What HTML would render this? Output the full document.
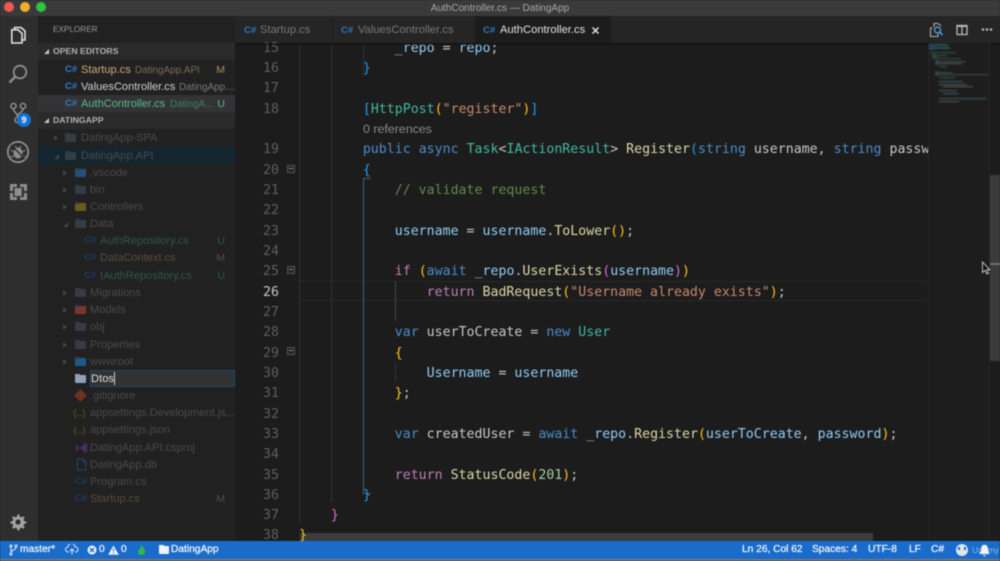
<!DOCTYPE html>
<html><head><meta charset="utf-8"><style>
*{box-sizing:border-box}
html,body{margin:0;padding:0;width:1000px;height:561px;overflow:hidden;background:#1c1c1c}
body{position:relative;font-family:"Liberation Sans",sans-serif}
#root{position:absolute;left:0;top:0;width:1000px;height:561px;filter:blur(.4px);overflow:hidden}
.a{position:absolute}
#root div,#root span.a{white-space:pre}
.r{position:absolute;left:38px;width:197px;height:17px;line-height:17px;font-size:11.05px;color:#4a4a4a}
.r .t{position:absolute;top:1px}
.r .s{position:absolute;top:1px;font-size:9.9px}
.r .g{position:absolute;top:1px;right:10px;font-size:10.5px}
.cs{position:absolute;top:0;color:#1b3e5e;font-weight:bold;font-size:9.5px}
.ar{position:absolute;top:6px;width:0;height:0;border-left:4px solid #444;border-top:3px solid transparent;border-bottom:3px solid transparent}
.dn{position:absolute;top:7px;width:0;height:0;border-bottom:5px solid #444;border-left:5px solid transparent}
.f{position:absolute;top:5px;width:11px;height:8px;background:#363c43;border-radius:1px}
.f:before{content:"";position:absolute;left:0;top:-1px;width:5px;height:2px;background:#363c43;border-radius:1px}
.h{position:absolute;left:38px;width:197px;height:17px;line-height:17px;background:#2a2a2b;color:#b0b0b0;font-size:8.7px;font-weight:bold}
.h i{position:absolute;left:6px;top:6px;width:0;height:0;border-bottom:5px solid #c4c4c4;border-left:5px solid transparent}
.h b{position:absolute;left:15px;top:0}
.n{position:absolute;left:250px;width:29px;text-align:right;height:20px;margin-top:2px;font:13.25px/20px "DejaVu Sans Mono","Liberation Mono",monospace;color:#5e5e5e}
.c{position:absolute;left:299px;height:20px;margin-top:2px;font:13.25px/20px "DejaVu Sans Mono","Liberation Mono",monospace;color:#d4d4d4;width:629px;overflow:hidden}
.k{color:#4a8ccb}.v{color:#8fcdf5}.y{color:#41b9a0}.m{color:#d9d9a8}.q{color:#c98a6c}.o{color:#5f8a4d}.p{color:#c07fb8}.b{color:#ffc21a}.l{color:#1f9cf0}.w{color:#d86fd0}.d{color:#c8c8c8}.z{color:#a9cea0}
.tab{position:absolute;top:16px;height:27px;line-height:29px;font-size:11.2px;color:#787878}
.tab i{position:absolute;top:0;left:8px;font-style:normal;font-weight:bold;font-size:9.5px;color:#2d79b8}
.st{position:absolute;top:541px;height:18px;line-height:18px;font-size:10.2px;color:#f0f4fa;-webkit-text-stroke:.25px #f0f4fa}
.fold{position:absolute;left:287px;width:8px;height:8px;border:1px solid #555;background:#232323}
.fold:after{content:"";position:absolute;left:1px;top:2px;width:4px;height:1px;background:#8a8a8a}
</style></head><body><div id="root">

<div class="a" style="left:0;top:0;width:1000px;height:16px;background:#3a3a3a"></div>
<div class="a" style="left:0;top:0;width:1000px;height:16px;line-height:15px;padding-top:1px;text-align:center;font-size:10px;color:#a8a8a8">AuthController.cs — DatingApp</div>
<div class="a" style="left:4px;top:2px;width:10px;height:10px;border-radius:50%;background:#f0584f"></div>
<div class="a" style="left:20px;top:2px;width:10px;height:10px;border-radius:50%;background:#f4ad2b"></div>
<div class="a" style="left:36px;top:2px;width:10px;height:10px;border-radius:50%;background:#2dc33f"></div>

<!-- activity bar -->
<div class="a" style="left:0;top:16px;width:38px;height:525px;background:#2e2e2f"></div>
<svg class="a" style="left:0;top:16px" width="38" height="525" fill="none">
<g stroke="#e6e6e6" stroke-width="1.5"><path d="M11.800 13.800 V27 H22 V17.500 L18 13.800 Z"/><path d="M14.500 13.500 V11.500 H21 L25 15 V24 H22.500"/></g>
<g stroke="#8d8d8d" stroke-width="1.800"><circle cx="20" cy="56" r="6.300"/><path d="M15.500 60.500 L9.500 66.500" stroke-width="2.400"/></g>
<g stroke="#8d8d8d" stroke-width="1.500"><circle cx="13.500" cy="90" r="2.600"/><circle cx="23" cy="90" r="2.600"/><circle cx="17.500" cy="104" r="2.600"/><path d="M13.500 93 C13.500 97 17.500 96 17.500 101 M23 93 C23 97 17.500 96 17.500 101"/></g>
<g stroke="#8d8d8d"><circle cx="18" cy="136" r="10.200" stroke-width="1.800"/><ellipse cx="18" cy="137" rx="4.500" ry="5.500" fill="#8d8d8d" stroke="none"/><path d="M10.500 134 L14 136 M10.500 141 L14 140 M25.500 134 L22 136 M25.500 141 L22 140 M15 130 L16.500 132 M21 130 L19.500 132" stroke-width="1"/><path d="M11 129 L25 143" stroke="#2e2e2f" stroke-width="1.500"/></g>
<g><path d="M10 168 h7 v3 h-4 v4 h-3 z M20 168 h7 v7 h-3 v-4 h-4 z M10 177 h3 v4 h4 v3 h-7 z M24 177 h3 v7 h-7 v-3 h4 z" fill="#8d8d8d"/><rect x="14.500" y="172" width="8" height="8" fill="#8d8d8d"/><path d="M22 172.500 v8 h-7" stroke="#2e2e2f" stroke-width=".8"/></g>
</svg>
<div class="a" style="left:17px;top:113px;width:14px;height:14px;border-radius:50%;background:#1473d4;color:#fff;font-size:9px;font-weight:bold;line-height:14px;text-align:center">9</div>
<svg class="a" style="left:9px;top:513px" width="18" height="18"><path d="M9 1.500 l1.300 0 .5 2.200 1.700 .7 1.900-1.200 1.300 1.300-1.200 1.900 .7 1.700 2.200 .5 0 1.800-2.200 .5-.7 1.700 1.200 1.900-1.300 1.300-1.900-1.200-1.700 .7-.5 2.200-1.800 0-.5-2.200-1.700-.7-1.900 1.200-1.300-1.300 1.200-1.900-.7-1.700-2.200-.5 0-1.800 2.200-.5 .7-1.700-1.200-1.900 1.300-1.300 1.900 1.200 1.700-.7 .5-2.200 z" fill="#a2a2a2"/><circle cx="9" cy="9" r="2.600" fill="#2e2e2f"/></svg>

<!-- sidebar -->
<div class="a" style="left:38px;top:16px;width:197px;height:525px;background:#212122"></div>
<div class="a" style="left:53px;top:22px;font-size:8.2px;color:#9a9a9a;line-height:16px">EXPLORER</div>
<div class="h" style="top:43px"><i></i><b>OPEN EDITORS</b></div>

<div class="r" style="top:61px"><span class="cs" style="left:27px;color:#2d7dc0">C#</span><span class="t" style="left:43px;color:#d0a878">Startup.cs</span><span class="s" style="left:97px;color:#7c6a52">DatingApp.API</span><span class="g" style="color:#a88c60">M</span></div>
<div class="r" style="top:78px"><span class="cs" style="left:27px;color:#2d7dc0">C#</span><span class="t" style="left:43px;color:#d0d0d0">ValuesController.cs</span><span class="s" style="left:141px;color:#7a7a7a">DatingApp....</span></div>
<div class="a" style="left:38px;top:95px;width:197px;height:17px;background:#333336"></div>
<div class="r" style="top:95px"><span class="cs" style="left:27px;color:#2d7dc0">C#</span><span class="t" style="left:43px;color:#58b98a">AuthController.cs</span><span class="s" style="left:132px;color:#3f7f60">DatingA...</span><span class="g" style="color:#58b98a">U</span></div>
<div class="h" style="top:112px;background:#2a2a2b"><i></i><b>DATINGAPP</b></div>

<div class="r" style="top:129px"><span class="ar" style="left:16px"></span><span class="f" style="left:27px"></span><span class="t" style="left:43px">DatingApp-SPA</span></div>
<div class="a" style="left:38px;top:147px;width:197px;height:17px;background:#13262f"></div>
<div class="r" style="top:147px"><span class="dn" style="left:16px"></span><span class="f" style="left:27px"></span><span class="t" style="left:43px">DatingApp.API</span></div>
<div class="r" style="top:164px"><span class="ar" style="left:25px"></span><span class="f" style="left:37px;background:#24507a"></span><span class="t" style="left:52px">.vscode</span></div>
<div class="r" style="top:181px"><span class="ar" style="left:25px"></span><span class="f" style="left:37px"></span><span class="t" style="left:52px">bin</span></div>
<div class="r" style="top:198px"><span class="ar" style="left:25px"></span><span class="f" style="left:37px;background:#6a5a20"></span><span class="t" style="left:52px">Controllers</span></div>
<div class="r" style="top:215px"><span class="dn" style="left:25px"></span><span class="f" style="left:37px"></span><span class="t" style="left:52px">Data</span></div>
<div class="r" style="top:232px"><span class="cs" style="left:46px">C#</span><span class="t" style="left:62px;color:#2f5744">AuthRepository.cs</span><span class="g" style="color:#2f5744">U</span></div>
<div class="r" style="top:249px"><span class="cs" style="left:46px">C#</span><span class="t" style="left:62px;color:#5a4c3a">DataContext.cs</span><span class="g" style="color:#5a4c3a">M</span></div>
<div class="r" style="top:267px"><span class="cs" style="left:46px">C#</span><span class="t" style="left:62px;color:#2f5744">IAuthRepository.cs</span><span class="g" style="color:#2f5744">U</span></div>
<div class="r" style="top:284px"><span class="ar" style="left:25px"></span><span class="f" style="left:37px"></span><span class="t" style="left:52px">Migrations</span></div>
<div class="r" style="top:301px"><span class="ar" style="left:25px"></span><span class="f" style="left:37px;background:#7a3530"></span><span class="t" style="left:52px">Models</span></div>
<div class="r" style="top:318px"><span class="ar" style="left:25px"></span><span class="f" style="left:37px"></span><span class="t" style="left:52px">obj</span></div>
<div class="r" style="top:336px"><span class="ar" style="left:25px"></span><span class="f" style="left:37px"></span><span class="t" style="left:52px">Properties</span></div>
<div class="r" style="top:353px"><span class="ar" style="left:25px"></span><span class="f" style="left:37px;background:#1f5a8a"></span><span class="t" style="left:52px">wwwroot</span></div>

<div class="a" style="left:75px;top:375px;width:11px;height:8px;background:#8ea3b3;border-radius:1px"></div>
<div class="a" style="left:75px;top:374px;width:5px;height:2px;background:#8ea3b3"></div>
<div class="a" style="left:90px;top:370px;width:145px;height:17px;background:#323233;border:1px solid #1c4a6e"></div>
<div class="a" style="left:91px;top:371px;line-height:17px;font-size:11.200px;color:#dcdcdc">Dtos</div>
<div class="a" style="left:114px;top:372px;width:1px;height:13px;background:#d0d0d0"></div>

<div class="r" style="top:387px"><span class="a" style="left:38px;top:4px;width:9px;height:9px;background:#6d3320;transform:rotate(45deg)"></span><span class="t" style="left:52px">.gitignore</span></div>
<div class="r" style="top:404px"><span class="t" style="left:35px;color:#4f451f;font-weight:bold;font-size:9.500px">{..}</span><span class="t" style="left:52px">appsettings.Development.js...</span></div>
<div class="r" style="top:421px"><span class="t" style="left:35px;color:#4f451f;font-weight:bold;font-size:9.500px">{..}</span><span class="t" style="left:52px">appsettings.json</span></div>
<div class="r" style="top:439px"><svg class="a" style="left:37px;top:3px" width="13" height="11"><path d="M1 3 L5 6 L1 9 Z M5 6 L10 1 L12 2 V10 L10 10.500 Z" fill="#4a2d63"/></svg><span class="t" style="left:52px">DatingApp.API.csproj</span></div>
<div class="r" style="top:456px"><svg class="a" style="left:38px;top:2px" width="11" height="13" fill="none"><path d="M1.500 1 H7 L10 4 V12 H1.500 Z M7 1 V4 H10" stroke="#21405f" stroke-width="1.200"/></svg><span class="t" style="left:52px">DatingApp.db</span></div>
<div class="r" style="top:473px"><span class="cs" style="left:37px">C#</span><span class="t" style="left:52px">Program.cs</span></div>
<div class="r" style="top:490px"><span class="cs" style="left:37px">C#</span><span class="t" style="left:52px;color:#5a4c3a">Startup.cs</span><span class="g" style="color:#5a4c3a">M</span></div>

<!-- tabs -->
<div class="a" style="left:235px;top:16px;width:765px;height:27px;background:#252526"></div>
<div class="a" style="left:332px;top:16px;width:1px;height:27px;background:#1e1e1e"></div>
<div class="a" style="left:475px;top:16px;width:136px;height:27px;background:#1c1c1c"></div>
<div class="tab" style="left:236px;width:96px"><i>C#</i><span class="a" style="left:24px;top:0">Startup.cs</span></div>
<div class="tab" style="left:333px;width:142px"><i>C#</i><span class="a" style="left:25px;top:0">ValuesController.cs</span></div>
<div class="tab" style="left:475px;width:136px;color:#e2e2e2"><i>C#</i><span class="a" style="left:25px;top:0">AuthController.cs</span></div>
<svg class="a" style="left:591px;top:26px" width="9" height="9"><path d="M1.500 1.500 L7.500 7.500 M7.500 1.500 L1.500 7.500" stroke="#e4e4e4" stroke-width="1.500"/></svg>
<svg class="a" style="left:928px;top:22px" width="20" height="16" fill="none"><path d="M3.500 6 H1.500 V14.500 H9 V12" stroke="#b0b0b0" stroke-width="1.100" transform="translate(1 0)"/><path d="M6 5 V1.500 H10 L13 4" stroke="#b0b0b0" stroke-width="1.100"/><circle cx="9.500" cy="8" r="3" stroke="#4b9be0" stroke-width="1.400"/><path d="M11.500 10 L14.500 13" stroke="#4b9be0" stroke-width="1.600"/></svg>
<svg class="a" style="left:956px;top:24px" width="13" height="12" fill="none"><rect x="1" y="1.500" width="10" height="9" stroke="#b8b8b8" stroke-width="1.300"/><path d="M6 1.500 V10.500" stroke="#b8b8b8" stroke-width="1.300"/><path d="M1 2 H11" stroke="#b8b8b8" stroke-width="2"/></svg>
<svg class="a" style="left:981px;top:27px" width="12" height="5"><circle cx="2" cy="2.500" r="1.300" fill="#b8b8b8"/><circle cx="6" cy="2.500" r="1.300" fill="#b8b8b8"/><circle cx="10" cy="2.500" r="1.300" fill="#b8b8b8"/></svg>

<!-- editor decor -->
<div class="a" style="left:235px;top:43px;width:765px;height:498px;background:#1c1c1c"></div>
<div class="a" style="left:300px;top:533px;width:573px;height:8px;background:#3c3c3c"></div>
<div class="a" style="left:300px;top:281px;width:628px;height:20px;border-top:1px solid #292929;border-bottom:1px solid #292929"></div>
<div class="a" style="left:299px;top:43px;width:1px;height:481px;background:#303030"></div>
<div class="a" style="left:331px;top:43px;width:1px;height:460px;background:#303030"></div>
<div class="a" style="left:363px;top:43px;width:1px;height:32px;background:#303030"></div>
<div class="a" style="left:363px;top:178px;width:8px;height:316px;border-left:1px solid #44627c;border-top:1px solid #44627c;border-bottom:1px solid #44627c"></div>
<div class="a" style="left:395px;top:281px;width:1px;height:40px;background:#454545"></div>
<div class="a" style="left:395px;top:362px;width:1px;height:20px;background:#333"></div>
<div class="fold" style="top:165px"></div><div class="fold" style="top:266px"></div><div class="fold" style="top:347px"></div>

<!-- line numbers -->
<div class="n" style="top:37px">15</div><div class="n" style="top:57px">16</div><div class="n" style="top:77px">17</div><div class="n" style="top:98px">18</div>
<div class="n" style="top:138px">19</div><div class="n" style="top:159px">20</div><div class="n" style="top:179px">21</div><div class="n" style="top:199px">22</div><div class="n" style="top:220px">23</div><div class="n" style="top:240px">24</div><div class="n" style="top:260px">25</div><div class="n" style="top:281px;color:#c6c6c6">26</div><div class="n" style="top:301px">27</div><div class="n" style="top:321px">28</div><div class="n" style="top:342px">29</div><div class="n" style="top:362px">30</div><div class="n" style="top:382px">31</div><div class="n" style="top:403px">32</div><div class="n" style="top:423px">33</div><div class="n" style="top:443px">34</div><div class="n" style="top:464px">35</div><div class="n" style="top:484px">36</div><div class="n" style="top:504px">37</div><div class="n" style="top:524px">38</div>

<!-- code -->
<div class="c" style="top:37px">            <span class="v">_repo</span> <span class="d">=</span> <span class="v">repo</span><span class="d">;</span></div>
<div class="c" style="top:57px">        <span class="l">}</span></div>
<div class="c" style="top:98px">        <span class="l">[</span><span class="y">HttpPost</span><span class="b">(</span><span class="q">"register"</span><span class="b">)</span><span class="l">]</span></div>
<div class="a" style="left:363px;top:122px;font-size:12.400px;line-height:15px;color:#8a8a8a">0 references</div>
<div class="c" style="top:138px">        <span class="k">public</span> <span class="k">async</span> <span class="y">Task</span><span class="d">&lt;</span><span class="y">IActionResult</span><span class="d">&gt;</span> <span class="m">Register</span><span class="l">(</span><span class="k">string</span> <span class="d">username,</span> <span class="k">string</span> <span class="d">password</span></div>
<div class="c" style="top:159px">        <span class="l">{</span></div>
<div class="c" style="top:179px">            <span class="o">// validate request</span></div>
<div class="c" style="top:220px">            <span class="v">username</span> <span class="d">=</span> <span class="v">username</span><span class="d">.</span><span class="m">ToLower</span><span class="b">()</span><span class="d">;</span></div>
<div class="c" style="top:260px">            <span class="p">if</span> <span class="b">(</span><span class="k">await</span> <span class="v">_repo</span><span class="d">.</span><span class="m">UserExists</span><span class="w">(</span><span class="v">username</span><span class="w">)</span><span class="b">)</span></div>
<div class="c" style="top:281px">                <span class="p">return</span> <span class="m">BadRequest</span><span class="b">(</span><span class="q">"Username already exists"</span><span class="b">)</span><span class="d">;</span></div>
<div class="c" style="top:321px">            <span class="k">var</span> <span class="d">userToCreate</span> <span class="d">=</span> <span class="k">new</span> <span class="y">User</span></div>
<div class="c" style="top:342px">            <span class="b">{</span></div>
<div class="c" style="top:362px">                <span class="v">Username</span> <span class="d">=</span> <span class="v">username</span></div>
<div class="c" style="top:382px">            <span class="b">}</span><span class="d">;</span></div>
<div class="c" style="top:423px">            <span class="k">var</span> <span class="d">createdUser</span> <span class="d">=</span> <span class="k">await</span> <span class="v">_repo</span><span class="d">.</span><span class="m">Register</span><span class="b">(</span><span class="v">userToCreate</span><span class="d">, </span><span class="v">password</span><span class="b">)</span><span class="d">;</span></div>
<div class="c" style="top:464px">            <span class="p">return</span> <span class="m">StatusCode</span><span class="b">(</span><span class="z">201</span><span class="b">)</span><span class="d">;</span></div>
<div class="c" style="top:484px">        <span class="l">}</span></div>
<div class="c" style="top:504px">    <span class="w">}</span></div>
<div class="c" style="top:524px"><span class="b">}</span></div>

<div class="a" style="left:235px;top:43px;width:765px;height:3px;background:linear-gradient(#111,rgba(28,28,28,0))"></div>

<!-- minimap -->
<div class="a" style="left:928px;top:43px;width:62px;height:498px;background:#1d1d1d;border-left:1px solid #262626;border-right:1px solid #262626"></div>
<svg class="a" style="left:929px;top:43px;filter:blur(.5px)" width="60" height="62">
<g opacity=".65"><rect x="0" y="1" width="6" height="6" fill="#2a5a80"/><rect x="6" y="1" width="13" height="2" fill="#2f6f6a"/><rect x="6" y="4" width="15" height="2" fill="#2f6f6a"/>
<rect x="1" y="9" width="26" height="1.300" fill="#3f6a55"/><rect x="3" y="11" width="5" height="5" fill="#2f5f50"/><rect x="8" y="12" width="10" height="1.300" fill="#5a5a40"/><rect x="8" y="15" width="24" height="1.300" fill="#356055"/>
<rect x="6" y="17" width="4" height="5" fill="#2a4f66"/><rect x="7" y="18" width="30" height="1.300" fill="#3a6c70"/><rect x="7" y="20" width="26" height="1.300" fill="#6a6a50"/><rect x="10" y="23" width="8" height="1.300" fill="#606060"/>
<rect x="6" y="28" width="4" height="5" fill="#2a4f66"/><rect x="7" y="29" width="16" height="1.300" fill="#3a6c70"/><rect x="7" y="31" width="52" height="1.300" fill="#4a6050"/><rect x="10" y="34" width="16" height="1.300" fill="#4a6a40"/>
<rect x="10" y="38" width="24" height="1.300" fill="#4a7080"/><rect x="10" y="41" width="28" height="1.300" fill="#5a6a70"/><rect x="14" y="43" width="30" height="1.300" fill="#806050"/><rect x="10" y="47" width="18" height="1.300" fill="#406a70"/><rect x="14" y="50" width="16" height="1.300" fill="#4a7080"/>
<rect x="10" y="55" width="48" height="1.300" fill="#4a6a80"/><rect x="10" y="58" width="20" height="1.300" fill="#6a6a50"/></g>
</svg>
<div class="a" style="left:990px;top:175px;width:10px;height:186px;background:#3b3b3b"></div>
<div class="a" style="left:990px;top:263px;width:10px;height:2px;background:#6e6e6e"></div>
<svg class="a" style="left:981px;top:261px;z-index:5" width="10" height="15"><path d="M1.500 1 V11.500 L4 9.300 L5.800 13 L7.500 12.200 L5.800 8.700 H8.800 Z" fill="#111" stroke="#d0d0d0" stroke-width=".9"/></svg>

<!-- status bar -->
<div class="a" style="left:0;top:541px;width:1000px;height:18px;background:#1a6ccb"></div>
<div class="a" style="left:0;top:559px;width:1000px;height:2px;background:#77777a"></div>
<svg class="a" style="left:9px;top:544px" width="9" height="12" fill="none" stroke="#e6effa" stroke-width="1"><circle cx="2" cy="2" r="1"/><circle cx="7" cy="2" r="1"/><circle cx="2" cy="10" r="1"/><path d="M2 3 V9 M7 3 C7 6 3 6 2 8"/></svg>
<div class="st" style="left:20px">master*</div>
<svg class="a" style="left:65px;top:544px" width="14" height="11" fill="none" stroke="#dfe9f6" stroke-width="1"><path d="M4 8 H3 A2.500 2.500 0 0 1 3 3 A3.500 3.500 0 0 1 10 3 A2.500 2.500 0 0 1 11 8 H10"/><path d="M7 10.500 V5 M5 7 L7 5 L9 7"/></svg>
<svg class="a" style="left:87px;top:545px" width="10" height="10"><circle cx="5" cy="5" r="4.500" fill="#f0f4fa"/><path d="M3 3 L7 7 M7 3 L3 7" stroke="#1a6ccb" stroke-width="1.300"/></svg>
<div class="st" style="left:99px">0</div>
<svg class="a" style="left:108px;top:545px" width="11" height="10"><path d="M5.500 0.500 L10.800 9.800 H.2 Z" fill="#f0f4fa"/><path d="M5.500 3.500 V6.500 M5.500 7.500 V8.700" stroke="#1a6ccb" stroke-width="1"/></svg>
<div class="st" style="left:121px">0</div>
<svg class="a" style="left:137px;top:544px" width="9" height="12"><path d="M4.500 .5 C5 3 8 4.500 8 8 C8 10 6.500 11 4.500 11 C2.500 11 1 10 1 8 C1 6.500 2 5.500 2.500 4.500 C3 5.500 3.500 5.500 3.500 5 C3.500 3.500 4 2 4.500 .5 Z" fill="#35b54a"/></svg>
<div class="a" style="left:159px;top:546px;width:10px;height:8px;background:#f0f4fa;border-radius:1px"></div>
<div class="a" style="left:159px;top:545px;width:5px;height:2px;background:#f0f4fa"></div>
<div class="st" style="left:171px">DatingApp</div>
<div class="st" style="left:742px">Ln 26, Col 62</div>
<div class="st" style="left:812px">Spaces: 4</div>
<div class="st" style="left:868px">UTF-8</div>
<div class="st" style="left:909px">LF</div>
<div class="st" style="left:931px">C#</div>
<div class="a" style="left:956px;top:544px;width:12px;height:12px;border-radius:50%;background:#dfe6ee"></div>
<div class="a" style="left:958px;top:547px;width:2px;height:3px;background:#1a6ccb"></div><div class="a" style="left:964px;top:547px;width:2px;height:3px;background:#1a6ccb"></div>
<div class="st" style="left:972px;font-size:8.500px;color:#8fb6e4;-webkit-text-stroke:0">Udemy</div>
<svg class="a" style="left:978px;top:544px" width="13" height="13"><path d="M6.500 .8 C9 .8 10 3 10 5.500 C10 8 11.500 9 11.500 10 H1.500 C1.500 9 3 8 3 5.500 C3 3 4 .8 6.500 .8 Z M5 11 H8 C8 12.500 5 12.500 5 11 Z" fill="#f0f4fa"/></svg>
</div></body></html>
